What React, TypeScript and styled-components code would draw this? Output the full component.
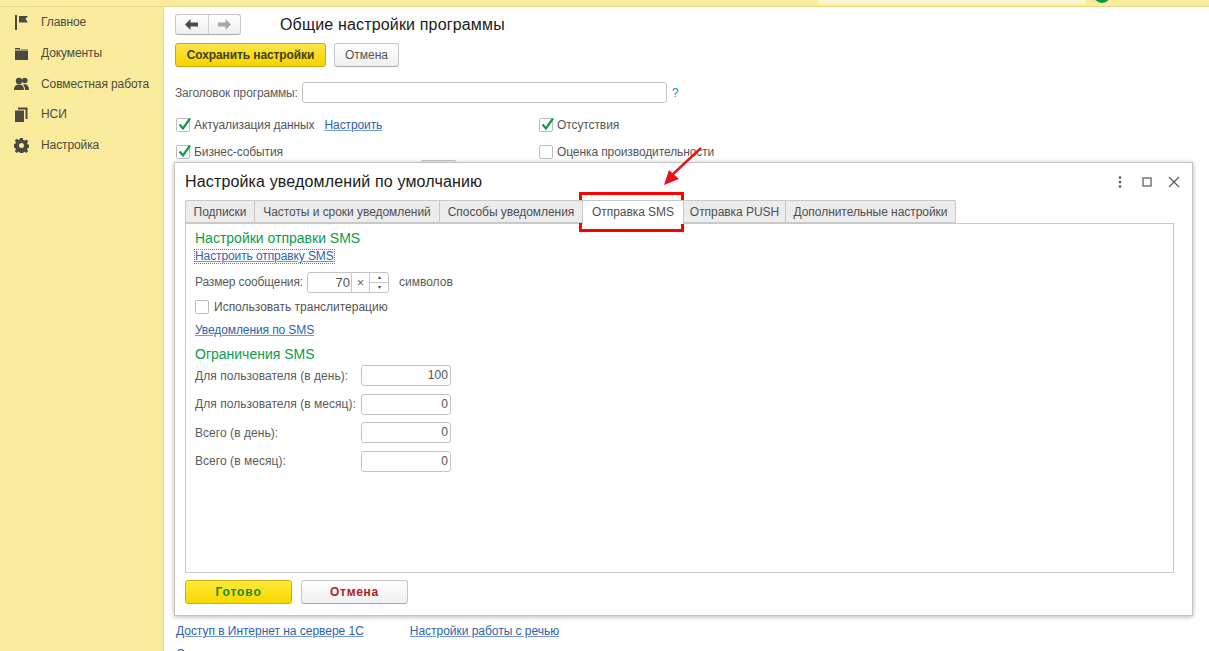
import React from "react";
import styled, { createGlobalStyle } from "styled-components";

const Global = createGlobalStyle`
  html, body { margin: 0; padding: 0; height: 100%; background: #fff; overflow: hidden; }
  body { font-family: "Liberation Sans", Arial, sans-serif; font-size: 12px; color: #4d4d4d; }
  * { box-sizing: border-box; }
`;

const Page = styled.div`
  position: relative;
  width: 1209px;
  height: 651px;
  overflow: hidden;
  display: flex;
  flex-direction: column;
`;
const TopBar = styled.header`
  height: 7px;
  flex: none;
  background: #fbec9d;
  border-bottom: 1px solid #e8d98c;
  display: flex;
  justify-content: flex-end;
  padding-right: 98px;
  gap: 8px;
`;
const SearchStub = styled.div`
  width: 267px;
  height: 4px;
  background: #fdf5cf;
`;
const StatusDot = styled.div`
  width: 18px;
  height: 18px;
  margin-top: -15px;
  border-radius: 50%;
  background: #0c9a47;
`;
const Body = styled.div`
  flex: 1;
  display: flex;
  min-height: 0;
`;
const Sidebar = styled.nav`
  width: 164px;
  flex: none;
  background: #fbec9d;
  border-right: 1px solid #e6d88f;
`;
const NavItem = styled.div`
  height: 30.7px;
  display: flex;
  align-items: center;
  gap: 12px;
  padding-left: 14px;
  font-size: 12px;
  letter-spacing: -0.1px;
  color: #4a4a3e;
  svg { flex: none; width: 15px; height: 15px; fill: #4a4a42; }
`;
const Main = styled.main`
  flex: 1;
  min-width: 0;
  padding: 7px 0 0 11px;
`;
const HeaderRow = styled.div`
  display: flex;
  align-items: center;
  height: 21px;
`;
const NavButtons = styled.div`
  width: 66px;
  height: 21px;
  display: flex;
  border: 1px solid #c9c9c9;
  border-bottom-color: #aaa;
  border-radius: 3px;
  background: linear-gradient(#fff, #efefef);
`;
const NavBtn = styled.div<{ $off?: boolean }>`
  flex: 1;
  display: flex;
  align-items: center;
  justify-content: center;
  color: ${(p) => (p.$off ? "#a8a8a8" : "#4a4a4a")};
  & + & { border-left: 1px solid #d4d4d4; }
  svg { width: 13px; height: 11px; fill: currentColor; }
`;
const PageTitle = styled.h1`
  margin: 0 0 0 39px;
  font-size: 16px;
  font-weight: 400;
  color: #1a1a1a;
  letter-spacing: 0.16px;
`;
const CommandRow = styled.div`
  display: flex;
  gap: 8px;
  margin-top: 8px;
`;
const SaveButton = styled.div`
  width: 151px;
  height: 24px;
  border: 1px solid #c9a90c;
  border-radius: 3px;
  background: linear-gradient(#fbe54a, #f6d400);
  display: flex;
  align-items: center;
  justify-content: center;
  font-weight: 700;
  font-size: 12px;
  letter-spacing: -0.1px;
  color: #44400f;
`;
const PlainButton = styled.div`
  width: 65px;
  height: 24px;
  border: 1px solid #c6c6c6;
  border-bottom-color: #a9a9a9;
  border-radius: 3px;
  background: linear-gradient(#fff, #efefef);
  display: flex;
  align-items: center;
  justify-content: center;
  color: #555;
`;
const TitleField = styled.div`
  display: flex;
  align-items: center;
  margin-top: 15px;
  height: 21px;
`;
const FieldLabel = styled.span`
  width: 127px;
  flex: none;
  white-space: nowrap;
  letter-spacing: -0.15px;
  color: #5b5b5b;
`;
const TitleInput = styled.div`
  width: 365px;
  height: 21px;
  border: 1px solid #c4c4c4;
  border-radius: 3px;
  background: #fff;
`;
const Help = styled.span`
  margin-left: 5px;
  color: #2a7fc0;
`;
const OptionGrid = styled.div`
  display: grid;
  grid-template-columns: 363px 1fr;
  grid-auto-rows: 27px;
  margin-top: 8px;
  padding-left: 1px;
`;
const Option = styled.div`
  display: flex;
  align-items: center;
  gap: 4px;
  color: #555;
  letter-spacing: -0.1px;
`;
const Box = styled.span`
  position: relative;
  width: 14px;
  height: 14px;
  flex: none;
  border: 1px solid #bcbcbc;
  border-radius: 2px;
  background: #fff;
  svg { position: absolute; left: 0; top: -3px; width: 15px; height: 15px; }
`;
const TextLink = styled.a`
  color: #2f62ad;
  text-decoration: underline;
  text-decoration-color: #6f9ad8;
  letter-spacing: -0.03px;
`;
const OptionLink = styled(TextLink)`
  margin-left: 6px;
  letter-spacing: -0.1px;
`;
const Footer = styled.div`
  position: absolute;
  left: 176px;
  top: 624px;
  line-height: 14px;
`;
const FooterLinks = styled.div`
  display: flex;
  gap: 46px;
  margin-bottom: 9px;
`;
const Peek = styled.div`
  position: absolute;
  left: 420px;
  top: 160px;
  width: 37px;
  height: 8px;
  border: 1px solid #c6c6c6;
  border-radius: 3px 3px 0 0;
  background: #f4f4f4;
`;

const Dialog = styled.section`
  position: absolute;
  left: 174px;
  top: 162px;
  width: 1019px;
  height: 454px;
  background: #fff;
  border: 1px solid #c4c4c4;
  box-shadow: 0 1px 5px rgba(0, 0, 0, 0.28);
  padding: 0 18px 0 10px;
  display: flex;
  flex-direction: column;
`;
const DialogHead = styled.div`
  height: 37px;
  flex: none;
  display: flex;
  align-items: center;
  justify-content: space-between;
`;
const DialogTitle = styled.h2`
  margin: 0;
  font-size: 16px;
  font-weight: 400;
  color: #1a1a1a;
  letter-spacing: 0.15px;
`;
const WinIcons = styled.div`
  display: flex;
  gap: 13px;
  margin-right: -7px;
  svg { width: 14px; height: 14px; display: block; }
`;
const Tabs = styled.div`
  height: 23px;
  flex: none;
  display: flex;
  position: relative;
  z-index: 1;
`;
const Tab = styled.div<{ $active?: boolean; $w: number }>`
  width: ${(p) => p.$w}px;
  height: ${(p) => (p.$active ? 24 : 23)}px;
  flex: none;
  display: flex;
  align-items: center;
  justify-content: center;
  padding-bottom: ${(p) => (p.$active ? 1 : 0)}px;
  white-space: nowrap;
  letter-spacing: -0.05px;
  background: ${(p) => (p.$active ? "#fff" : "#ececec")};
  border: 1px solid #c8c8c8;
  border-left-width: 0;
  border-bottom-width: ${(p) => (p.$active ? 0 : 1)}px;
  color: #4f4f4f;
  &:first-child { border-left-width: 1px; border-top-left-radius: 2px; }
  &:last-child { border-top-right-radius: 2px; }
`;
const TabPanel = styled.div`
  width: 989px;
  height: 350px;
  flex: none;
  border: 1px solid #c8c8c8;
  padding: 6px 0 0 9px;
`;
const SectionTitle = styled.div`
  font-size: 14px;
  line-height: 17px;
  color: #0d9b4c;
`;
const FocusLink = styled(TextLink)`
  display: block;
  width: fit-content;
  margin-top: 3px;
  line-height: 13px;
  letter-spacing: -0.1px;
  outline: 1px dotted #777;
`;
const SizeRow = styled.div`
  display: flex;
  align-items: center;
  height: 22px;
  margin-top: 8px;
  color: #5b5b5b;
`;
const SizeLabel = styled.span`
  width: 112px;
  flex: none;
  white-space: nowrap;
  letter-spacing: -0.15px;
`;
const Spin = styled.div`
  width: 82px;
  height: 21px;
  display: flex;
  flex: none;
  border: 1px solid #c4c4c4;
  border-radius: 3px;
  color: #555;
`;
const SpinValue = styled.span`
  flex: 1;
  text-align: right;
  padding-right: 1px;
  line-height: 19px;
  font-size: 13px;
  border-right: 1px solid #c8c8c8;
`;
const SpinClear = styled.span`
  width: 18px;
  flex: none;
  display: flex;
  align-items: center;
  justify-content: center;
  border-right: 1px solid #c8c8c8;
  font-size: 13px;
  color: #666;
`;
const SpinArrows = styled.span`
  width: 18px;
  flex: none;
  display: flex;
  flex-direction: column;
  div { flex: 1; display: flex; align-items: center; justify-content: center; font-size: 6px; line-height: 1; color: #444; }
  div + div { border-top: 1px solid #c8c8c8; }
`;
const SizeUnit = styled.span`
  margin-left: 10px;
`;
const TranslitRow = styled(Option)`
  margin-top: 5px;
  height: 18px;
  gap: 5px;
  letter-spacing: 0;
`;
const SmsLink = styled(TextLink)`
  display: block;
  width: fit-content;
  margin-top: 7px;
  line-height: 14px;
  letter-spacing: -0.1px;
`;
const LimitsTitle = styled(SectionTitle)`
  margin-top: 9px;
`;
const LimitRow = styled.div`
  display: flex;
  align-items: center;
  height: 21px;
  margin-bottom: 7.5px;
  letter-spacing: 0.05px;
  color: #5b5b5b;
`;
const LimitRows = styled.div`
  margin-top: 2px;
`;
const LimitLabel = styled.span`
  width: 166px;
  flex: none;
  white-space: nowrap;
`;
const LimitInput = styled.div`
  width: 90px;
  height: 21px;
  border: 1px solid #c4c4c4;
  border-radius: 3px;
  text-align: right;
  padding-right: 2px;
  line-height: 19px;
  color: #555;
`;
const DialogActions = styled.div`
  display: flex;
  gap: 9px;
  margin-top: 7px;
`;
const DoneButton = styled.div`
  width: 107px;
  height: 24px;
  border: 1px solid #cfae10;
  border-radius: 3px;
  background: linear-gradient(#fdea3a, #f8d800);
  display: flex;
  align-items: center;
  justify-content: center;
  font-weight: 700;
  letter-spacing: 0.9px;
  color: #1f8a17;
`;
const CancelButton = styled.div`
  width: 107px;
  height: 24px;
  border: 1px solid #c6c6c6;
  border-bottom-color: #a9a9a9;
  border-radius: 3px;
  background: linear-gradient(#fff, #efefef);
  display: flex;
  align-items: center;
  justify-content: center;
  font-weight: 700;
  letter-spacing: 0.7px;
  color: #b21d1d;
`;
const Highlight = styled.div`
  position: absolute;
  left: 579px;
  top: 192px;
  width: 105px;
  height: 40px;
  border: 3px solid #ff0000;
`;
const ArrowMark = styled.svg`
  position: absolute;
  left: 655px;
  top: 140px;
  width: 56px;
  height: 52px;
`;

const Check = () => (
  <svg viewBox="0 0 15 15">
    <path d="M2.5 8.5 L6 12.5 L13 2.5" fill="none" stroke="#109a4b" strokeWidth="2.2" />
  </svg>
);

const navItems: [string, React.ReactNode][] = [
  ["Главное", <svg viewBox="0 0 15 15" key="a"><path d="M1 0h2v15H1zM5 1h9l-2.500 3L14 7.500H5z" /></svg>],
  ["Документы", <svg viewBox="0 0 15 15" key="b"><path d="M1 2h5v1.500H1zM1 4.500h13V14H1zM7 3h7v.5H7z" /></svg>],
  ["Совместная работа", <svg viewBox="0 0 15 15" key="c"><circle cx="5" cy="5" r="3.200" /><circle cx="10.800" cy="4.500" r="2.800" /><path d="M0 14c0-4 2-5.500 5-5.500S10 10 10 14zM11 14c0-2-.5-4-2-5.500 3-1 6 .5 6 5.500z" /></svg>],
  ["НСИ", <svg viewBox="0 0 15 15" key="d"><path d="M1 3.500h9V15H1zM4 .5h9.500V12H11.500V2.500H4z" /></svg>],
  ["Настройка", <svg viewBox="0 0 15 15" key="e"><path fillRule="evenodd" d="M6.200 0h2.600l.4 2 1.500.6 1.700-1.100 1.800 1.800-1.100 1.700.6 1.500 2 .4v2.600l-2 .4-.6 1.500 1.100 1.700-1.800 1.800-1.700-1.100-1.500.6-.4 2H6.200l-.4-2-1.500-.6-1.700 1.100-1.800-1.800 1.100-1.700-.6-1.500-2-.4V6.200l2-.4.6-1.500-1.100-1.700 1.800-1.800 1.700 1.100 1.500-.6zM7.500 5a2.500 2.500 0 1 0 0 5 2.500 2.500 0 0 0 0-5z" /></svg>],
];

const tabs: [string, number, boolean?][] = [
  ["Подписки", 70],
  ["Частоты и сроки уведомлений", 185],
  ["Способы уведомления", 143],
  ["Отправка SMS", 101, true],
  ["Отправка PUSH", 102],
  ["Дополнительные настройки", 170],
];

const limits: [string, string][] = [
  ["Для пользователя (в день):", "100"],
  ["Для пользователя (в месяц):", "0"],
  ["Всего (в день):", "0"],
  ["Всего (в месяц):", "0"],
];

export default function App() {
  return (
    <Page>
      <Global />
      <TopBar>
        <SearchStub />
        <StatusDot />
      </TopBar>
      <Body>
        <Sidebar>
          {navItems.map(([label, icon]) => (
            <NavItem key={label}>
              {icon}
              {label}
            </NavItem>
          ))}
        </Sidebar>
        <Main>
          <HeaderRow>
            <NavButtons>
              <NavBtn>
                <svg viewBox="0 0 13 11"><path d="M0 5.500 5.500 0v3.500H13v4H5.500V11z" /></svg>
              </NavBtn>
              <NavBtn $off>
                <svg viewBox="0 0 13 11"><path d="M13 5.500 7.500 0v3.500H0v4h7.500V11z" /></svg>
              </NavBtn>
            </NavButtons>
            <PageTitle>Общие настройки программы</PageTitle>
          </HeaderRow>
          <CommandRow>
            <SaveButton>Сохранить настройки</SaveButton>
            <PlainButton>Отмена</PlainButton>
          </CommandRow>
          <TitleField>
            <FieldLabel>Заголовок программы:</FieldLabel>
            <TitleInput />
            <Help>?</Help>
          </TitleField>
          <OptionGrid>
            <Option>
              <Box><Check /></Box>
              Актуализация данных
              <OptionLink>Настроить</OptionLink>
            </Option>
            <Option>
              <Box><Check /></Box>
              Отсутствия
            </Option>
            <Option>
              <Box><Check /></Box>
              Бизнес-события
            </Option>
            <Option>
              <Box />
              Оценка производительности
            </Option>
          </OptionGrid>
        </Main>
      </Body>
      <Peek />
      <Footer>
        <FooterLinks>
          <TextLink>Доступ в Интернет на сервере 1С</TextLink>
          <TextLink>Настройки работы с речью</TextLink>
        </FooterLinks>
        <TextLink>Сведения о программе</TextLink>
      </Footer>
      <Dialog>
        <DialogHead>
          <DialogTitle>Настройка уведомлений по умолчанию</DialogTitle>
          <WinIcons>
            <svg viewBox="0 0 14 14"><g fill="#555"><circle cx="7" cy="2.500" r="1.300" /><circle cx="7" cy="7" r="1.300" /><circle cx="7" cy="11.500" r="1.300" /></g></svg>
            <svg viewBox="0 0 14 14"><rect x="3" y="3" width="8" height="8" fill="none" stroke="#555" strokeWidth="1.200" /></svg>
            <svg viewBox="0 0 14 14"><path d="M2 2l10 10M12 2 2 12" stroke="#555" strokeWidth="1.100" /></svg>
          </WinIcons>
        </DialogHead>
        <Tabs>
          {tabs.map(([label, w, active]) => (
            <Tab key={label} $w={w} $active={active}>{label}</Tab>
          ))}
        </Tabs>
        <TabPanel>
          <SectionTitle>Настройки отправки SMS</SectionTitle>
          <FocusLink>Настроить отправку SMS</FocusLink>
          <SizeRow>
            <SizeLabel>Размер сообщения:</SizeLabel>
            <Spin>
              <SpinValue>70</SpinValue>
              <SpinClear>×</SpinClear>
              <SpinArrows>
                <div>▴</div>
                <div>▾</div>
              </SpinArrows>
            </Spin>
            <SizeUnit>символов</SizeUnit>
          </SizeRow>
          <TranslitRow>
            <Box />
            Использовать транслитерацию
          </TranslitRow>
          <SmsLink>Уведомления по SMS</SmsLink>
          <LimitsTitle>Ограничения SMS</LimitsTitle>
          <LimitRows>
            {limits.map(([label, value]) => (
              <LimitRow key={label}>
                <LimitLabel>{label}</LimitLabel>
                <LimitInput>{value}</LimitInput>
              </LimitRow>
            ))}
          </LimitRows>
        </TabPanel>
        <DialogActions>
          <DoneButton>Готово</DoneButton>
          <CancelButton>Отмена</CancelButton>
        </DialogActions>
      </Dialog>
      <Highlight />
      <ArrowMark viewBox="0 0 56 52">
        <path d="M46 8 L17 35" stroke="#e8141c" strokeWidth="2.500" fill="none" />
        <path d="M9 45 L14 30 L24 39 Z" fill="#e8141c" />
      </ArrowMark>
    </Page>
  );
}
